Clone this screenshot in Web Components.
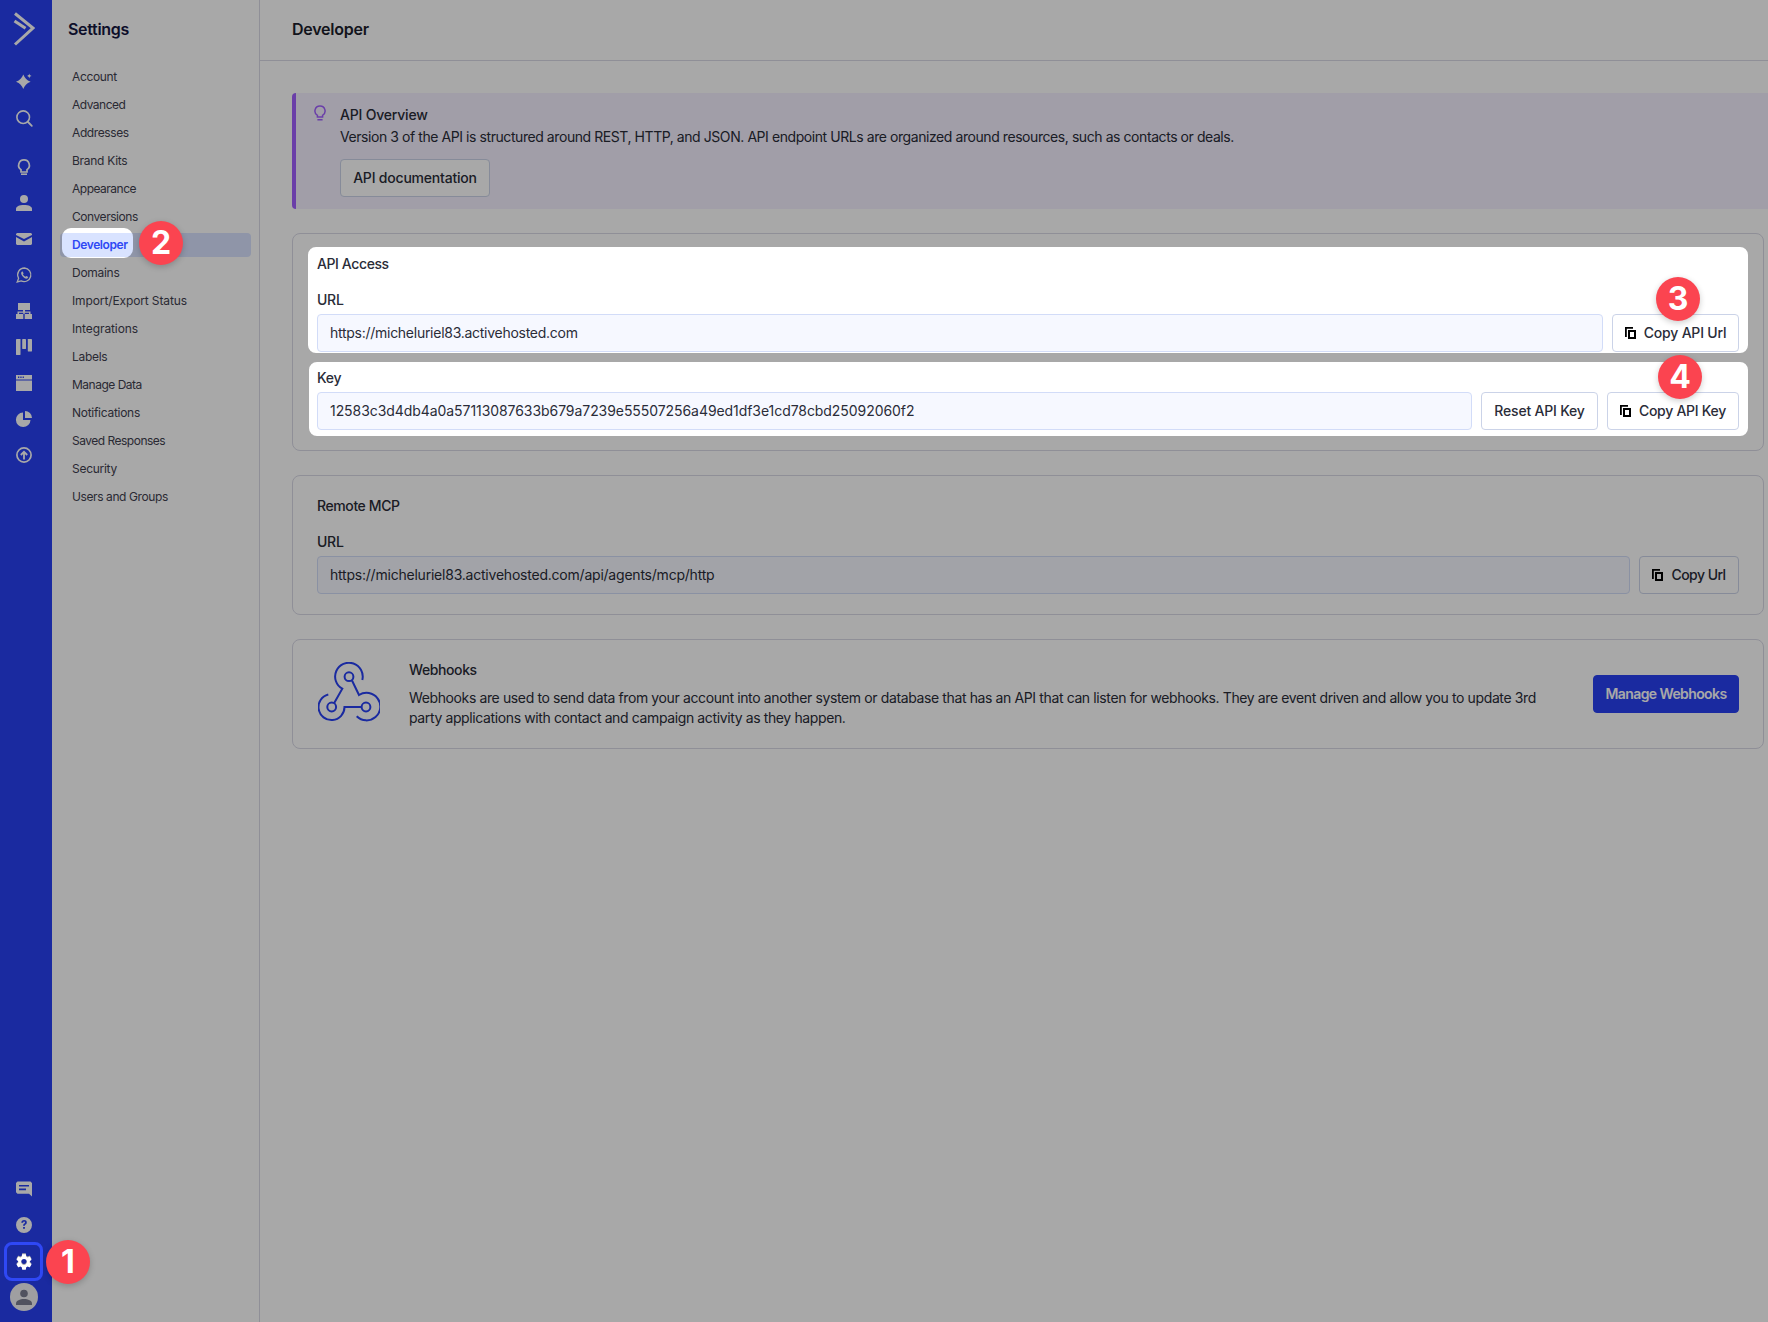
<!DOCTYPE html>
<html lang="en"><head><meta charset="utf-8"><title>Developer settings</title>
<style>
html,body{margin:0;padding:0;height:100%;overflow:hidden;background:#fff}
body{font-family:"Inter","Liberation Sans",sans-serif;font-size:14px;color:#2a2c38}
</style></head><body>
<app-shell>
  <rail-nav slot="rail"></rail-nav>
  <settings-nav slot="side" active="Developer"></settings-nav>
  <dev-page slot="main"></dev-page>
</app-shell>
<tour-overlay></tour-overlay>
<script>
const def=(n,html)=>{customElements.define(n,class extends HTMLElement{constructor(){super();this.attachShadow({mode:'open'}).innerHTML=typeof html==='function'?html(this):html;}})};

def('app-shell',`<style>:host{display:flex;width:1768px;height:1322px;overflow:hidden}
.side{width:207px;flex:none;border-right:1px solid #d9d9e6;box-sizing:content-box}
.main{flex:1;min-width:0}</style>
<slot name="rail"></slot><div class="side"><slot name="side"></slot></div><div class="main"><slot name="main"></slot></div>`);

const GEAR=`<path transform="translate(-1.600 -1.600) scale(.8)" d="M19.14 12.94c.04-.3.06-.61.06-.94 0-.32-.02-.64-.07-.94l2.03-1.58c.18-.14.23-.41.12-.61l-1.92-3.32c-.12-.22-.37-.29-.59-.22l-2.39.96c-.5-.38-1.03-.7-1.62-.94l-.36-2.54c-.04-.24-.24-.41-.48-.41h-3.84c-.24 0-.43.17-.47.41l-.36 2.54c-.59.24-1.13.57-1.62.94l-2.39-.96c-.22-.08-.47 0-.59.22L2.74 8.87c-.12.21-.08.47.12.61l2.03 1.58c-.05.3-.09.63-.09.94s.02.64.07.94l-2.03 1.58c-.18.14-.23.41-.12.61l1.92 3.32c.12.22.37.29.59.22l2.39-.96c.5.38 1.03.7 1.62.94l.36 2.54c.05.24.24.41.48.41h3.84c.24 0 .44-.17.47-.41l.36-2.54c.59-.24 1.13-.56 1.62-.94l2.39.96c.22.08.47 0 .59-.22l1.92-3.32c.12-.22.07-.47-.12-.61l-2.01-1.58zM12 15.6c-1.98 0-3.6-1.62-3.6-3.6s1.62-3.6 3.6-3.6 3.6 1.62 3.6 3.6-1.62 3.6-3.6 3.6z"/>`;
const ICONS={
 star:`<path d="M7.300 2.400c1.300 3.100 3.300 5.900 7.300 7.300-4 1.400-6 4.200-7.300 7.300-1.300-3.100-3.300-5.900-7.300-7.300 4-1.400 6-4.200 7.300-7.300z"/><path d="M13.300 1.600c.3 1.500.8 2 2.300 2.400-1.500.4-2 .9-2.300 2.400-.3-1.500-.8-2-2.300-2.400 1.500-.4 2-.9 2.300-2.400z"/>`,
 search:`<circle cx="7.200" cy="7.200" r="6.300" fill="none" stroke="#fff" stroke-width="1.600"/><path d="M12 12l3.800 3.800" stroke="#fff" stroke-width="1.800" stroke-linecap="round"/>`,
 bulb:`<path d="M8 .9a5.300 5.300 0 0 0-3 9.700V13h6v-2.400A5.300 5.300 0 0 0 8 .9z" fill="none" stroke="#fff" stroke-width="1.700"/><path d="M5 14.400h6V16H5z"/>`,
 person:`<circle cx="8" cy="4" r="4"/><path d="M0 16v-2C0 11.500 3 10 8 10s8 1.500 8 4v2z"/>`,
 mail:`<path d="M0 3l1-1h14l1 1v1L8 8 0 4z"/><path d="M0 6l8 4.500L16 6v7l-1 1H1l-1-1z"/>`,
 whatsapp:`<path d="M8.500 1a6.800 6.800 0 0 0-5.900 10.200L1.200 15l3.900-1.100A6.800 6.800 0 1 0 8.500 1z" fill="none" stroke="#fff" stroke-width="1.300"/><path d="M6 4.500c-1.200.8-1.200 2.500.3 4.500s3.500 3 5 2.500l1-1.500-2-1.100-.9.9c-1-.4-2-1.500-2.500-2.500l.7-.8-.9-2z"/>`,
 org:`<path d="M2 0h12v7H9v1.500h5.500V11H13V9.800H8.700V11H7.300V9.800H3V11H1.500V8.500H7V7H2z"/><path d="M0 11h7.300v5H0zM8.700 11H16v5H8.700z"/>`,
 kanban:`<rect x="0" y="0" width="4.500" height="16" rx=".4"/><rect x="6.200" y="0" width="3.800" height="10" rx=".4"/><rect x="11.800" y="0" width="4.200" height="12.500" rx=".4"/>`,
 win:`<path fill-rule="evenodd" d="M0 0h16v4.500H0zM2 1.600v1.300h1.300V1.600zM4.300 1.600v1.300h1.300V1.600zM6.600 1.600v1.300h1.300V1.600zM0 5.500h16V16H0z"/>`,
 pie:`<path d="M7 1.500a7.300 7.300 0 1 0 7.500 7.500H7z"/><path d="M9 0v7h7a7 7 0 0 0-7-7z"/>`,
 up:`<circle cx="8" cy="8" r="7.100" fill="none" stroke="#fff" stroke-width="1.700"/><path d="M8 12.500V5M4.800 8L8 4.800 11.200 8" fill="none" stroke="#fff" stroke-width="1.800"/>`,
 chat:`<path fill-rule="evenodd" d="M1.500 .5h13L16 2v13.500l-3-2.700H1.500L0 11.300V2zM3 3.900v1.700h10V3.900zM3 7.500v1.700h7V7.500z"/>`,
 help:`<path fill-rule="evenodd" d="M8 0a8 8 0 1 1 0 16A8 8 0 0 1 8 0zM5.300 5.800h1.800c.1-.8.400-1.200 1-1.200s.9.300.9.800c0 .5-.3.800-.8 1.200-.8.600-1.100 1.100-1.100 2.200h1.800c0-.6.200-.9.700-1.300.7-.6 1.200-1.100 1.200-2.100 0-1.500-1.100-2.300-2.700-2.300-1.700 0-2.700 1-2.800 2.700zM7.100 10v1.800h1.800V10z"/>`,
 gear:GEAR
};
def('rail-icon',t=>`<style>:host{display:flex;width:48px;height:36px;align-items:center;justify-content:center}svg{display:block;fill:#fff;overflow:visible}</style>
<svg width="16" height="16" viewBox="0 0 16 16" aria-hidden="true">${ICONS[t.getAttribute('name')]||''}</svg>`);

def('rail-nav',`<style>:host{display:flex;flex-direction:column;width:52px;flex:none;height:1322px;background:#2841f3}
.logo{width:48px;height:62px;display:flex;align-items:center;justify-content:center;padding-bottom:4px;box-sizing:border-box}
.sp{margin-top:2px}.gap{margin-top:13px}.grow{flex:1}
.av{width:28px;height:28px;border-radius:50%;background:#f2f2f4;display:flex;align-items:center;justify-content:center;margin:4px 14px 11px 10px;overflow:hidden}
</style>
<div class="logo"><svg width="22" height="34" viewBox="0 0 22 34"><path d="M2 1.500L20 16 2 32.500" fill="none" stroke="#fff" stroke-width="3"/><path d="M1.500 9l11 7.200" fill="none" stroke="#fff" stroke-width="3"/></svg></div>
<rail-icon name="star"></rail-icon><rail-icon name="search" class="sp"></rail-icon>
<rail-icon name="bulb" class="gap"></rail-icon><rail-icon name="person"></rail-icon><rail-icon name="mail"></rail-icon><rail-icon name="whatsapp"></rail-icon><rail-icon name="org"></rail-icon><rail-icon name="kanban"></rail-icon><rail-icon name="win"></rail-icon><rail-icon name="pie"></rail-icon><rail-icon name="up"></rail-icon>
<div class="grow"></div>
<rail-icon name="chat"></rail-icon><rail-icon name="help"></rail-icon><rail-icon name="gear"></rail-icon>
<div class="av"><svg width="16" height="16" viewBox="0 0 16 16" fill="#7b7f90"><circle cx="8" cy="4.500" r="3.800"/><path d="M0 16v-1.500C0 11.500 4 10 8 10s8 1.500 8 4.500V16z"/></svg></div>`);

const NAV=[['Account',-.35],['Advanced',-.5],['Addresses',-.4],['Brand Kits',-.28],['Appearance',-.5],['Conversions',-.45],['Developer',-.4],['Domains',-.28],['Import/Export Status',-.12],['Integrations',-.1],['Labels',-.28],['Manage Data',-.5],['Notifications',-.28],['Saved Responses',-.5],['Security',-.28],['Users and Groups',-.4]];
def('settings-nav',t=>`<style>:host{display:block}
h2{margin:0;height:58px;padding:0 0 2px 16px;display:flex;align-items:center;font:600 16px/20px "Inter","Liberation Sans",sans-serif;color:#14163f;letter-spacing:-.3px}
nav{display:flex;flex-direction:column;gap:4px;padding:5px 8px 0}
a{height:24px;display:flex;align-items:center;padding-left:12px;border-radius:4px;font:400 12px/16px "Inter","Liberation Sans",sans-serif;color:#3f414f}
a.on{background:#d9e3ff;color:#2f48f5;font-weight:600}</style>
<h2>Settings</h2><nav>${NAV.map(([n,l])=>`<a style="letter-spacing:${l}px" class="${n===t.getAttribute('active')?'on':''}">${n}</a>`).join('')}</nav>`);

def('ac-button',t=>`<style>:host{display:inline-flex;flex:none}
button{height:38px;width:${t.getAttribute('w')}px;padding:0;box-sizing:border-box;display:flex;align-items:center;justify-content:center;gap:8px;border:1px solid #cbd3e8;border-radius:4px;background:#fff;color:#2a2c38;font:500 14px/20px "Inter","Liberation Sans",sans-serif;letter-spacing:${t.getAttribute('ls')||'-.2'}px;white-space:nowrap}
:host([primary]) button{background:#2841f3;border-color:#2841f3;color:#fff;font-weight:600}
svg{display:block}</style>
<button>${t.hasAttribute('copy')?`<svg width="11" height="12" viewBox="0 0 11 12" fill="#000"><path d="M0 0h8v1.800H1.800V10H0z"/><path fill-rule="evenodd" d="M3 3h8v9H3zM5 5v5h4V5z"/></svg>`:''}<slot></slot></button>`);

def('field-row',t=>`<style>:host{display:block;margin-top:16px}
label{display:block;font:500 14px/20px "Inter","Liberation Sans",sans-serif;letter-spacing:-.25px;margin-bottom:4px;color:#2a2c38}
.r{display:flex;gap:8px}
.i{flex:1;min-width:0;height:38px;box-sizing:border-box;border:1px solid #d2dcf8;border-radius:4px;background:#f6f8ff;padding:0 12px;display:flex;align-items:center;font:400 14px/20px "Inter","Liberation Sans",sans-serif;letter-spacing:${t.getAttribute('ls')||'-.25px'};color:#2a2c38;white-space:nowrap}
::slotted(ac-button){margin-left:1px}</style>
<label>${t.getAttribute('label')}</label><div class="r"><div class="i">${t.getAttribute('value')}</div><slot></slot></div>`);

def('ac-card',`<style>:host{display:block;border:1px solid #d9d9e6;border-radius:8px;padding:20px 24px;background:#fff}
h3{margin:0;font:500 14px/20px "Inter","Liberation Sans",sans-serif;letter-spacing:-.4px;color:#2a2c38}</style>
<h3><slot name="title"></slot></h3><slot></slot>`);

def('info-banner',`<style>:host{display:flex;background:#f4f0ff;border-left:4px solid #a15fff;border-radius:4px 0 0 4px;padding:12px 0 12px 18px;margin-right:-4px;gap:14px}
.b{flex:1;min-width:0}svg{display:block;flex:none}
h3{margin:0 0 2px;font:500 14px/20px "Inter","Liberation Sans",sans-serif;letter-spacing:-.2px}
p{margin:0 0 12px;font:400 14px/20px "Inter","Liberation Sans",sans-serif;letter-spacing:-.43px;color:#2a2c38}</style>
<svg width="12" height="16" viewBox="0 0 12 16"><path d="M6 1a5 5 0 0 0-2.600 9.300V12h5.200v-1.700A5 5 0 0 0 6 1z" fill="none" stroke="#a15fff" stroke-width="1.500"/><path d="M3.400 14h5.200v1.500H3.400z" fill="#a15fff"/></svg>
<div class="b"><h3><slot name="title"></slot></h3><p><slot></slot></p><slot name="action"></slot></div>`);

def('webhooks-card',`<style>:host{display:flex;align-items:center;border:1px solid #d9d9e6;border-radius:8px;padding:20px 24px 20px 25px}
svg{flex:none;display:block;margin:0 29px 4px 0}
.t{flex:1;min-width:0}
h3{margin:0 0 8px;font:500 14px/20px "Inter","Liberation Sans",sans-serif;letter-spacing:-.4px}
p{margin:0;font:400 14px/20px "Inter","Liberation Sans",sans-serif;letter-spacing:-.38px;white-space:nowrap}</style>
<svg width="62" height="60" viewBox="0 0 62 60" fill="none" stroke="#2841f3" stroke-width="2"><circle cx="31" cy="14.700" r="4.400"/><circle cx="13.700" cy="45" r="4.400"/><circle cx="48" cy="45" r="4.400"/>
<path d="M34 18.500L41 33A13.800 13.800 0 1 1 38.700 54.300"/><path d="M43.600 45H26.500A13 13 0 1 1 10.300 32.500"/><path d="M16.200 41L24.300 26.700A13.800 13.800 0 1 1 44.300 18"/></svg>
<div class="t"><h3>Webhooks</h3><p><slot></slot></p></div><slot name="action"></slot>`);

def('dev-page',`<style>:host{display:block}
header{height:58px;padding:0 0 2px 32px;border-bottom:1px solid #d9d9e6;display:flex;align-items:center;font:600 16px/20px "Inter","Liberation Sans",sans-serif;color:#1c1e2c;letter-spacing:-.25px}
.c{padding:32px 4px 0 32px;display:flex;flex-direction:column;gap:24px}</style>
<header>Developer</header>
<div class="c">
<info-banner><span slot="title">API Overview</span>Version 3 of the API is structured around REST, HTTP, and JSON. API endpoint URLs are organized around resources, such as contacts or deals.<ac-button slot="action" w="150">API documentation</ac-button></info-banner>
<ac-card><span slot="title">API Access</span>
<field-row label="URL" ls="-.27px" value="https://micheluriel83.activehosted.com"><ac-button copy w="127">Copy API Url</ac-button></field-row>
<field-row label="Key" ls="-.065px" value="12583c3d4db4a0a57113087633b679a7239e55507256a49ed1df3e1cd78cbd25092060f2"><ac-button w="117">Reset API Key</ac-button><ac-button copy w="132" ls="-.27">Copy API Key</ac-button></field-row>
</ac-card>
<ac-card><span slot="title">Remote MCP</span>
<field-row label="URL" ls="-.22px" value="https://micheluriel83.activehosted.com/api/agents/mcp/http"><ac-button copy w="100" ls="-.55">Copy Url</ac-button></field-row>
</ac-card>
<webhooks-card>Webhooks are used to send data from your account into another system or database that has an API that can listen for webhooks. They are event driven and allow you to update 3rd<br>party applications with contact and campaign activity as they happen.<ac-button slot="action" primary w="146" ls="-.6">Manage Webhooks</ac-button></webhooks-card>
</div>`);

def('tour-badge',t=>`<style>:host{position:absolute;left:${t.getAttribute('x')-22}px;top:${t.getAttribute('y')-22}px;width:44px;height:44px;border-radius:50%;background:#fb4450;color:#fff;display:flex;align-items:center;justify-content:center;font:700 32px/1 "Inter","Liberation Sans",sans-serif;box-shadow:0 2px 6px rgba(0,0,0,.2)}</style><slot></slot>`);

const rr=(x,y,w,h,r)=>`M${x+r} ${y}h${w-2*r}a${r} ${r} 0 0 1 ${r} ${r}v${h-2*r}a${r} ${r} 0 0 1 ${-r} ${r}h${-(w-2*r)}a${r} ${r} 0 0 1 ${-r} ${-r}v${-(h-2*r)}a${r} ${r} 0 0 1 ${r} ${-r}z`;
const holes=[[62,228,71,30,9],[308,247,1440,106,8],[309,362,1439,74,8]];
def('tour-overlay',`<style>:host{position:absolute;left:0;top:0;width:1768px;height:1322px;pointer-events:none}
svg{position:absolute;left:0;top:0;display:block}
.ring{position:absolute;left:4px;top:1242px;width:39px;height:39px;box-sizing:border-box;border:3px solid #2f48f5;border-radius:8px;display:flex;align-items:center;justify-content:center}
.ring svg{position:static;fill:#fff}</style>
<svg width="1768" height="1322"><path fill="#000" fill-opacity=".34" fill-rule="evenodd" d="M0 0H1768V1322H0z${holes.map(h=>rr(...h)).join('')}"/></svg>
<div class="ring"><svg width="16" height="16" viewBox="0 0 16 16">${GEAR}</svg></div>
<tour-badge x="68" y="1262">1</tour-badge><tour-badge x="161" y="243">2</tour-badge><tour-badge x="1678" y="299">3</tour-badge><tour-badge x="1680" y="377">4</tour-badge>`);
</script>
</body></html>
